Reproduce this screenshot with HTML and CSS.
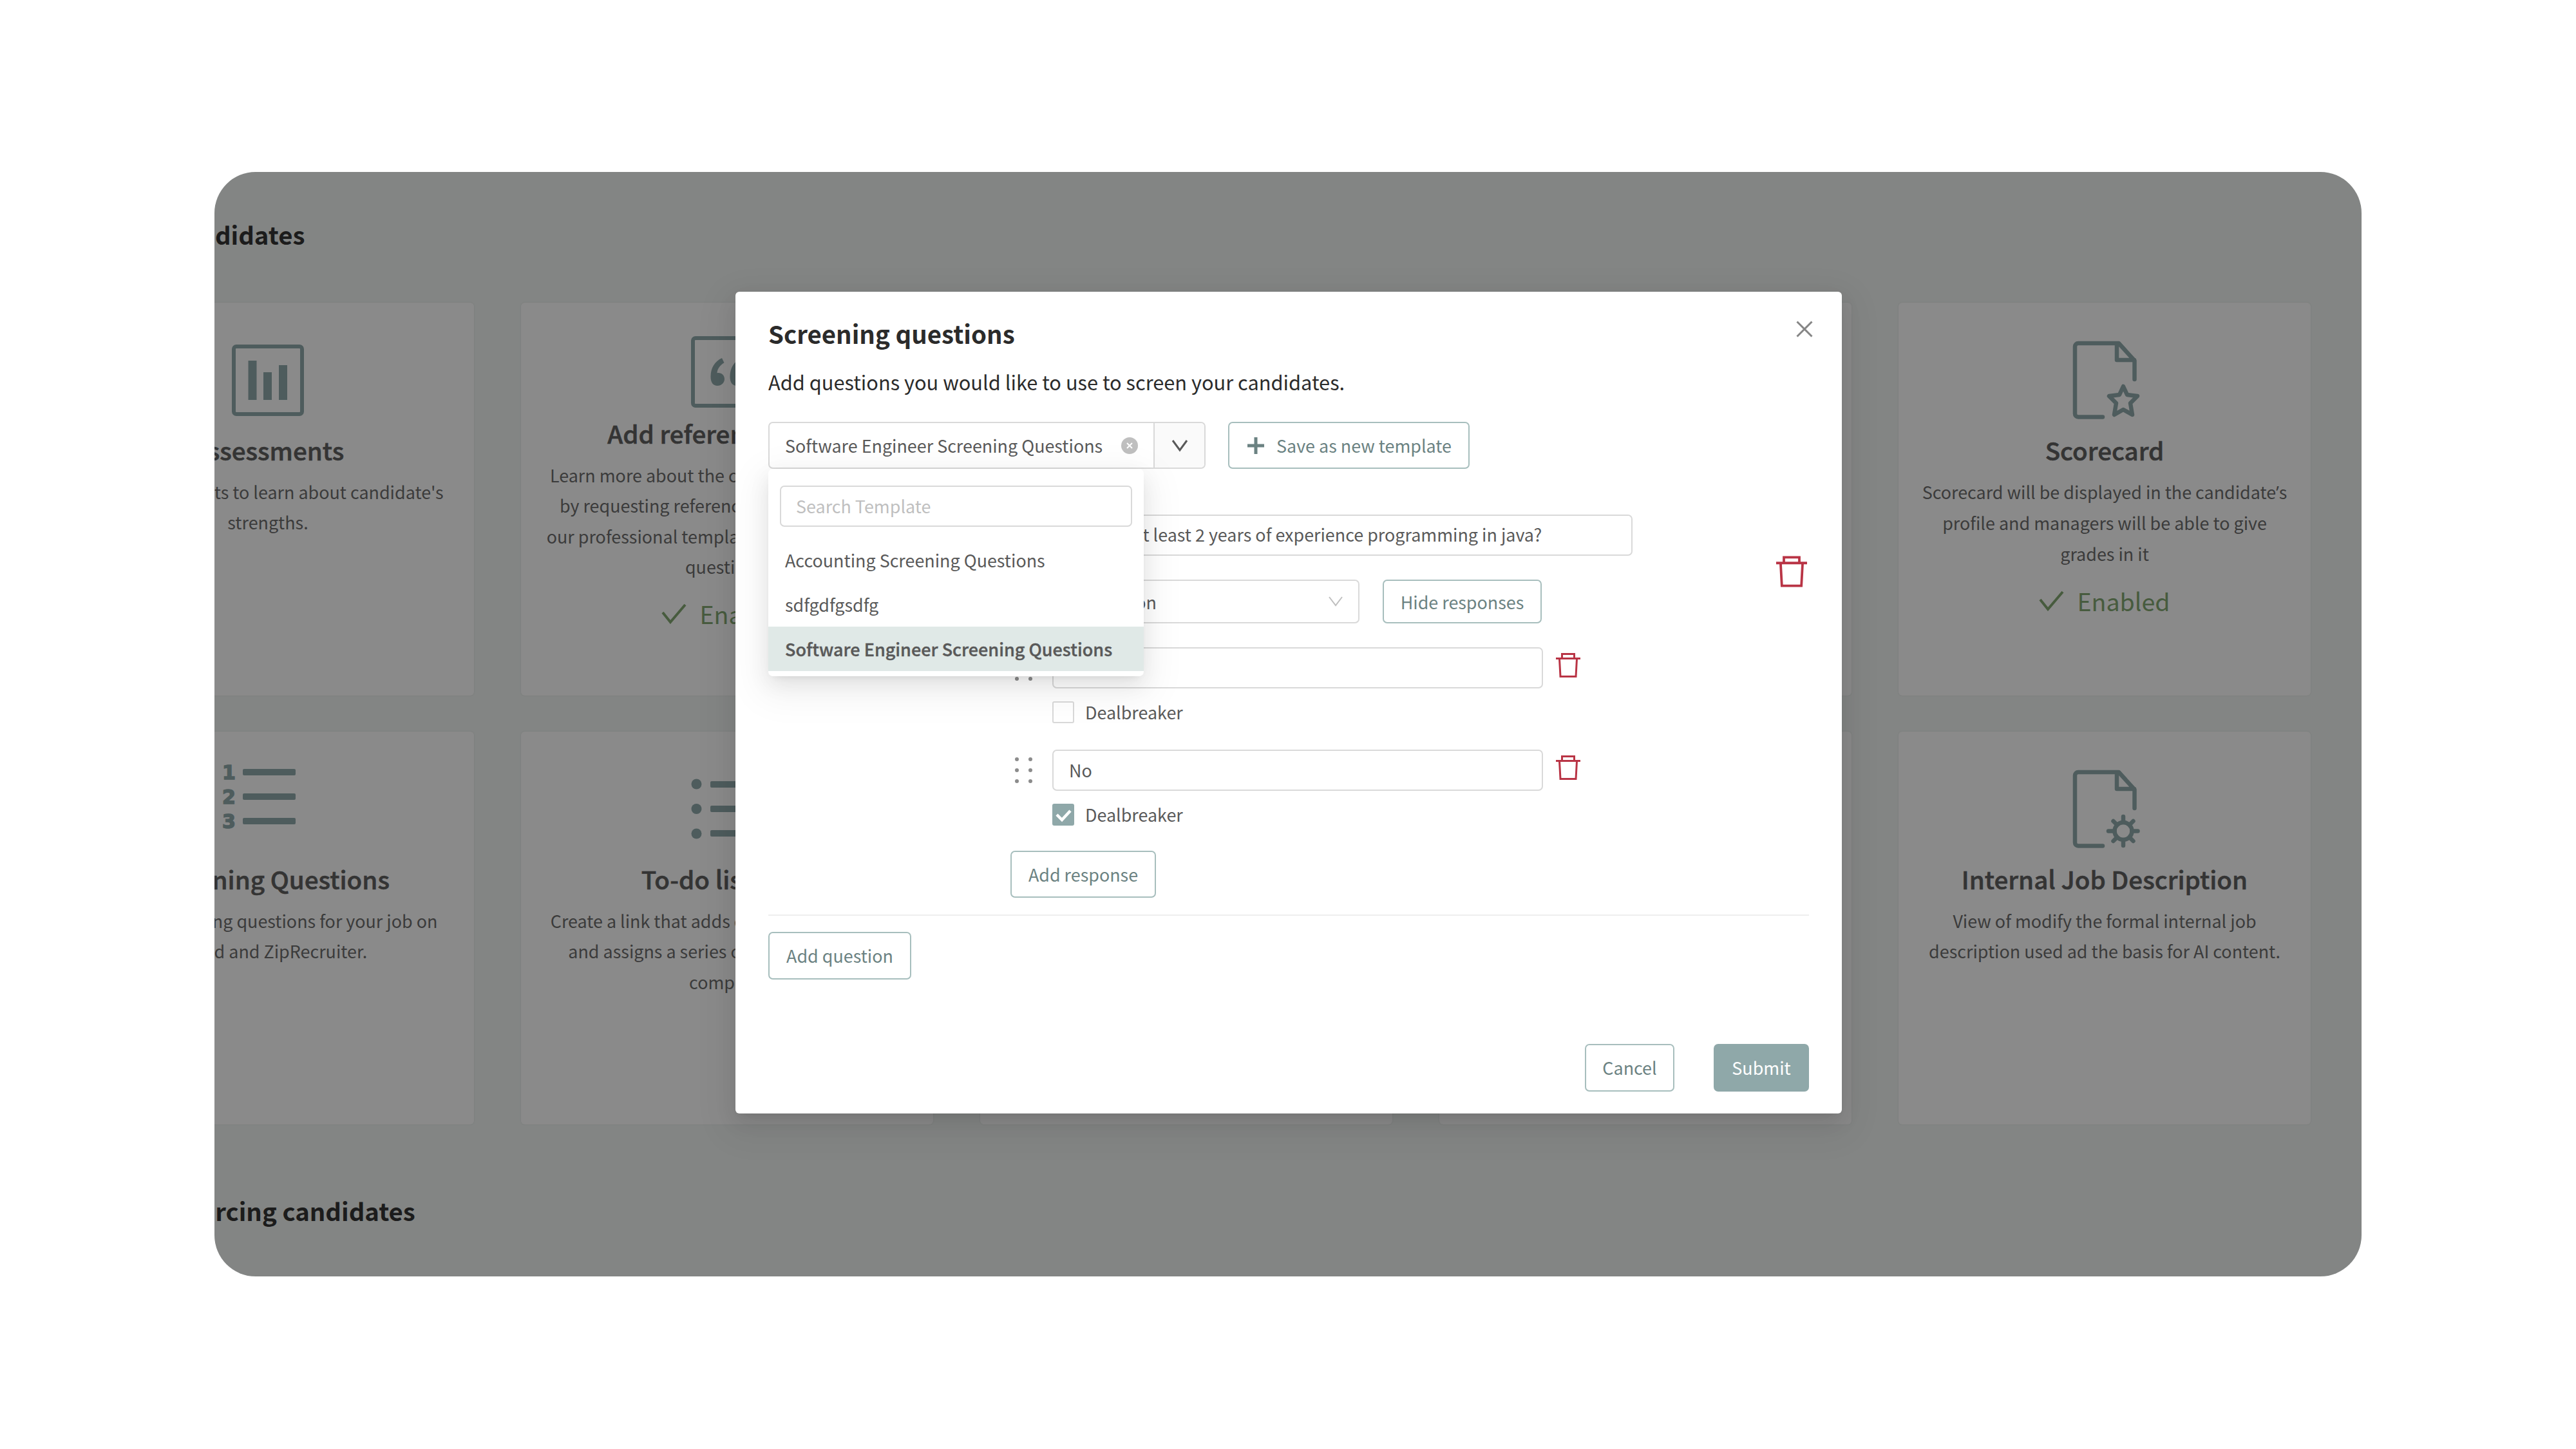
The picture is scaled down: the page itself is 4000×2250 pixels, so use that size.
FILE: index.html
```
<!DOCTYPE html>
<html lang="en">
<head>
  <meta charset="UTF-8" />
  <meta name="viewport" content="width=device-width, initial-scale=1.0"/>
  <title>Screening questions</title>
  <link rel="stylesheet" href="styles.css">
</head>
<body>

  <div class="frame">
    <div class="page">
      <h2 class="section-title">candidates</h2>

      <div class="cards">
        <div class="card">
          <svg class="card-icon" viewBox="0 0 128 128">
            <rect x="11" y="12" width="106" height="105" rx="4" fill="none" stroke="currentColor" stroke-width="6"/>
            <rect x="33.5" y="34" width="13" height="61"/>
            <rect x="57" y="52" width="13" height="43"/>
            <rect x="81" y="41" width="13" height="54"/>
          </svg>
          <h3>Assessments</h3>
          <p>Use assessments to learn about candidate's<br>strengths.</p>
        </div>

        <div class="card compact">
          <svg class="card-icon" viewBox="0 0 128 128">
            <rect x="11" y="12" width="106" height="105" rx="4" fill="none" stroke="currentColor" stroke-width="6"/>
            <path id="quote" d="M56 43c-11 5-17.500 15-17.500 29c0 9 4 14 10.500 14c6 0 11-4.500 11-10.500c0-5.500-4-9.500-9.500-9.500c-1 0-1.500 0-2 .3c.6-7 4.500-12 11-16z"/>
            <use href="#quote" x="30"/>
          </svg>
          <h3>Add reference check</h3>
          <p>Learn more about the candidate's past work<br>by requesting references online and using<br>our professional templates or adding custom<br>questions.</p>
          <div class="enabled">
            <svg viewBox="0 0 39 32"><path d="M2 14l12 15L37 2"/></svg>
            Enabled
          </div>
        </div>

        <div class="card"></div>
        <div class="card"></div>

        <div class="card">
          <svg class="card-icon" viewBox="0 0 128 128">
            <path class="line" d="M110.500 63V34L86 7H23a5 5 0 0 0-5 5v104.500a5 5 0 0 0 5 5h38M83 8v25h27"/>
            <path class="line" d="M93 74l6 13 16 2-11 11 3 18-14-8-14 8 3-18-11-11 16-2z"/>
          </svg>
          <h3>Scorecard</h3>
          <p>Scorecard will be displayed in the candidate<span class="apos">’</span>s<br>profile and managers will be able to give<br>grades in it</p>
          <div class="enabled">
            <svg viewBox="0 0 39 32"><path d="M2 14l12 15L37 2"/></svg>
            Enabled
          </div>
        </div>

        <div class="card">
          <svg class="card-icon" viewBox="0 0 128 128">
            <g class="digits">
              <text x="-7" y="17.500">1</text>
              <text x="-7" y="56">2</text>
              <text x="-7" y="94">3</text>
            </g>
            <rect x="25" y="2" width="82" height="10" rx="2"/>
            <rect x="25" y="40" width="82" height="10" rx="2"/>
            <rect x="25" y="78" width="82" height="10" rx="2"/>
          </svg>
          <h3>Screening Questions</h3>
          <p>Create screening questions for your job on<br>Indeed and ZipRecruiter.</p>
        </div>

        <div class="card">
          <svg class="card-icon" viewBox="0 0 128 128">
            <circle cx="16.500" cy="25.500" r="8"/>
            <circle cx="16.500" cy="64" r="8"/>
            <circle cx="16.500" cy="102.500" r="8"/>
            <rect x="38" y="21" width="82" height="10" rx="2"/>
            <rect x="38" y="59" width="82" height="10" rx="2"/>
            <rect x="38" y="97" width="82" height="10" rx="2"/>
          </svg>
          <h3>To-do list links</h3>
          <p>Create a link that adds candidates to the job<br>and assigns a series of tasks for them to<br>complete</p>
        </div>

        <div class="card"></div>
        <div class="card"></div>

        <div class="card">
          <svg class="card-icon" viewBox="0 0 128 128">
            <path class="line" d="M110.500 63V34L86 7H23a5 5 0 0 0-5 5v104.500a5 5 0 0 0 5 5h38M83 8v25h27"/>
            <circle class="line" cx="93" cy="98.500" r="13.500"/>
            <path class="line" d="M93 85V76M93 112v9M79.500 98.500H70M106.500 98.500h9M83.500 89l-6-6M102.500 89l6-6M83.500 108l-6 6M102.500 108l6 6"/>
          </svg>
          <h3>Internal Job Description</h3>
          <p>View of modify the formal internal job<br>description used ad the basis for AI content.</p>
        </div>
      </div>

      <h2 class="section-title sourcing">Sourcing candidates</h2>
    </div>

    <div class="mask">
      <div class="modal">
        <svg class="close" viewBox="0 0 26 26"><path d="M1.500 1.500l23 23M24.500 1.500l-23 23"/></svg>
        <h1>Screening questions</h1>
        <p class="intro">Add questions you would like to use to screen your candidates.</p>

        <div class="toolbar">
          <div class="template">
            <div class="template-value">
              Software Engineer Screening Questions
              <svg class="clear" viewBox="0 0 26 26"><circle cx="13" cy="13" r="13"/><path d="M9 9l8 8M17 9l-8 8"/></svg>
            </div>
            <div class="template-arrow">
              <svg viewBox="0 0 26 20"><path d="M2 2l11 15L24 2"/></svg>
            </div>

            <div class="dropdown">
              <div class="search">Search Template</div>
              <div class="option">Accounting Screening Questions</div>
              <div class="option">sdfgdfgsdfg</div>
              <div class="option selected">Software Engineer Screening Questions</div>
            </div>
          </div>
          <button class="btn save">
            <svg viewBox="0 0 26 26"><path d="M13 0v26M0 13h26"/></svg>
            Save as new template
          </button>
        </div>

        <div class="question">
          <div class="question-body">
            <div class="input title-input">Do you have at least 2 years of experience programming in java?</div>
            <div class="type-row">
              <div class="select">
                Yes/No question
                <svg viewBox="0 0 24 18"><path d="M2 2l10 13L22 2"/></svg>
              </div>
              <button class="btn">Hide responses</button>
            </div>

            <div class="response">
              <svg class="drag" viewBox="0 0 28 42"><circle cx="4" cy="4" r="3"/><circle cx="25" cy="4" r="3"/><circle cx="4" cy="21" r="3"/><circle cx="25" cy="21" r="3"/><circle cx="4" cy="38" r="3"/><circle cx="25" cy="38" r="3"/></svg>
              <div class="input">Yes</div>
              <svg class="trash" viewBox="0 0 38 38"><path d="M0 8.500h38M9.500 8V1.500h19V8M5.500 9L7 36.500h24L32.500 9"/></svg>
            </div>
            <div class="dealbreaker">
              <span class="checkbox"></span>
              Dealbreaker
            </div>

            <div class="response">
              <svg class="drag" viewBox="0 0 28 42"><circle cx="4" cy="4" r="3"/><circle cx="25" cy="4" r="3"/><circle cx="4" cy="21" r="3"/><circle cx="25" cy="21" r="3"/><circle cx="4" cy="38" r="3"/><circle cx="25" cy="38" r="3"/></svg>
              <div class="input">No</div>
              <svg class="trash" viewBox="0 0 38 38"><path d="M0 8.500h38M9.500 8V1.500h19V8M5.500 9L7 36.500h24L32.500 9"/></svg>
            </div>
            <div class="dealbreaker">
              <span class="checkbox checked">
                <svg viewBox="0 0 34 34"><path d="M7 17l8 8L28 11"/></svg>
              </span>
              Dealbreaker
            </div>

            <button class="btn add-response">Add response</button>
          </div>
          <svg class="trash trash-big" viewBox="0 0 38 38"><path d="M0 8.500h38M9.500 8V1.500h19V8M5.500 9L7 36.500h24L32.500 9"/></svg>
        </div>

        <button class="btn add-question">Add question</button>

        <div class="footer">
          <button class="btn">Cancel</button>
          <button class="btn primary">Submit</button>
        </div>
      </div>
    </div>
  </div>

</body>
</html>
```
FILE: styles.css
```
* {
  box-sizing: border-box;
}
body {
  margin: 0;
  padding: 267px 333px;
  background: #fff;
  font-family: "Noto Sans CJK SC", "Open Sans", sans-serif;
  font-size: 26.9px;
  color: #595959;
}
h1, h2, h3, p {
  margin: 0;
}
.frame {
  position: relative;
  width: 3334px;
  height: 1715px;
  border-radius: 64px;
  background: #eef2f0;
  overflow: hidden;
}

/* page behind the modal, scrolled to the right */
.page {
  width: 3571px;
  margin-left: -237px;
  padding-top: 67px;
}
.section-title {
  margin-left: 171px;
  font-size: 38.3px;
  font-weight: 700;
  line-height: 60px;
  color: #333;
}
.section-title.sourcing {
  margin-left: 166px;
}
.cards {
  display: grid;
  grid-template-columns: repeat(5, 640px);
  grid-auto-rows: 610px;
  gap: 56px 73px;
  margin: 76px 0 104px;
}
.card {
  padding-top: 56px;
  border-radius: 6px;
  background: #fcfcfc;
  box-shadow: 0 0 3px rgba(0, 0, 0, 0.08);
  text-align: center;
}
.card-icon {
  display: block;
  width: 128px;
  height: 128px;
  margin: 0 auto 14px;
  overflow: visible;
  fill: currentColor;
  color: #8fa8a9;
}
.card-icon .line {
  fill: none;
  stroke: currentColor;
  stroke-width: 6.5;
  stroke-linecap: round;
  stroke-linejoin: round;
}
.digits {
  font: 700 30px "DejaVu Sans", sans-serif;
  stroke: currentColor;
  stroke-width: 1.5;
}
.card h3 {
  font-size: 38.6px;
  font-weight: 500;
  line-height: 60px;
  color: #606060;
  -webkit-text-stroke: 0.6px #606060;
}
.card p {
  margin-top: 12px;
  line-height: 47.3px;
  white-space: nowrap;
  color: #6c6c6c;
}
.apos {
  font-family: "Open Sans", sans-serif;
}
.card.compact {
  padding-top: 43px;
}
.card.compact .card-icon {
  margin-bottom: 1px;
}
.enabled {
  display: flex;
  justify-content: center;
  align-items: center;
  gap: 20px;
  margin-top: 20px;
  font-size: 37.6px;
  line-height: 60px;
  color: #81a771;
}
.enabled svg {
  width: 39px;
  height: 32px;
  fill: none;
  stroke: currentColor;
  stroke-width: 4;
}

.mask {
  position: absolute;
  inset: 0;
  display: flex;
  justify-content: center;
  align-items: flex-start;
  padding: 186px 0 0 2px;
  background: rgba(0, 0, 0, 0.45);
}
.modal {
  position: relative;
  width: 1718px;
  height: 1276px;
  padding: 38px 51px 34px;
  border-radius: 6px;
  background: #fff;
  box-shadow: 0 6px 12px -8px rgba(0, 0, 0, 0.12), 0 12px 32px rgba(0, 0, 0, 0.08), 0 18px 56px 16px rgba(0, 0, 0, 0.05);
}
.close {
  position: absolute;
  top: 45px;
  right: 45px;
  width: 26px;
  height: 26px;
  stroke: #858585;
  stroke-width: 3;
}
.modal h1 {
  font-size: 38.4px;
  font-weight: 700;
  line-height: 52px;
  color: #2b2b2b;
}
.intro {
  margin-top: 28px;
  font-size: 30.77px;
  line-height: 44px;
  color: #2b2b2b;
}

/* template picker */
.toolbar {
  display: flex;
  gap: 35px;
  margin-top: 40px;
}
.template {
  position: relative;
  display: flex;
  width: 679px;
  height: 73px;
  border: 2px solid #d9d9d9;
  border-radius: 7px;
}
.template-value {
  display: flex;
  flex: 1;
  justify-content: space-between;
  align-items: center;
  padding: 0 24px 0 24px;
}
.clear {
  width: 26px;
  height: 26px;
  fill: #bfbfbf;
}
.clear path {
  stroke: #fff;
  stroke-width: 2;
}
.template-arrow {
  display: flex;
  justify-content: center;
  align-items: center;
  width: 79px;
  border-left: 2px solid #d9d9d9;
  border-radius: 0 6px 6px 0;
  background: #fafafa;
}
.template-arrow svg {
  width: 26px;
  height: 20px;
  fill: none;
  stroke: #595959;
  stroke-width: 3;
}
.dropdown {
  position: absolute;
  top: 71px;
  left: -2px;
  z-index: 2;
  width: 583px;
  padding: 26px 0 8px;
  border-radius: 7px;
  background: #fff;
  box-shadow: 0 6px 12px -8px rgba(0, 0, 0, 0.12), 0 12px 32px rgba(0, 0, 0, 0.08), 0 18px 56px 16px rgba(0, 0, 0, 0.05);
}
.search {
  height: 64px;
  margin: 0 18px 17px;
  padding-left: 23px;
  border: 2px solid #d9d9d9;
  border-radius: 7px;
  line-height: 59px;
  color: #bfbfbf;
}
.option {
  height: 69px;
  padding-left: 26px;
  line-height: 69px;
  white-space: nowrap;
}
.option.selected {
  background: #e0e9e7;
  font-size: 27px;
  font-weight: 500;
  -webkit-text-stroke: 0.4px #595959;
}

.btn {
  height: 73px;
  padding: 0 25px;
  border: 2px solid #a7bebd;
  border-radius: 7px;
  background: #fff;
  font: inherit;
  line-height: 66px;
  color: #6b8282;
  white-space: nowrap;
}
.btn.save {
  display: flex;
  align-items: center;
  gap: 19px;
  width: 375px;
  padding: 0 0 0 28px;
}
.btn.save svg {
  width: 26px;
  height: 26px;
  stroke: currentColor;
  stroke-width: 5;
}

/* question editor */
.question {
  display: flex;
  align-items: flex-start;
  padding: 71px 0 26px 376px;
  border-bottom: 2px solid #eee;
}
.question-body {
  width: 966px;
}
.input {
  height: 64px;
  padding-left: 24px;
  border: 2px solid #d9d9d9;
  border-radius: 7px;
  line-height: 60px;
  white-space: nowrap;
}
.title-input {
  padding-left: 29px;
  line-height: 58px;
}
.type-row {
  display: flex;
  gap: 36px;
  margin: 37px 0;
}
.type-row .btn {
  width: 247px;
  height: 68px;
}
.select {
  display: flex;
  justify-content: space-between;
  align-items: center;
  width: 542px;
  height: 68px;
  padding: 0 23px 0 22px;
  border: 2px solid #d9d9d9;
  border-radius: 7px;
}
.select svg {
  width: 24px;
  height: 18px;
  fill: none;
  stroke: #bfbfbf;
  stroke-width: 2;
}
.response {
  display: flex;
  align-items: center;
  padding-left: 6px;
}
.response .input {
  width: 762px;
  margin-left: 31px;
}
.drag {
  width: 28px;
  height: 42px;
  fill: #8c8c8c;
}
.trash {
  width: 38px;
  height: 38px;
  margin: -8px 0 0 20px;
  fill: none;
  stroke: #b93445;
  stroke-width: 3;
}
.trash-big {
  width: 48px;
  height: 49px;
  margin: 64px 0 0 223px;
}
.dealbreaker {
  display: flex;
  align-items: center;
  gap: 17px;
  height: 34px;
  margin: 20px 0 41px 65px;
  line-height: 32px;
}
.checkbox {
  width: 34px;
  height: 34px;
  border: 2px solid #d9d9d9;
  border-radius: 3px;
  background: #fff;
}
.checkbox.checked {
  border: 0;
  background: #8fa8a9;
}
.checkbox svg {
  display: block;
  fill: none;
  stroke: #fff;
  stroke-width: 4.5;
}
.add-response {
  display: block;
  width: 226px;
  margin-top: -2px;
}
.add-question {
  display: block;
  width: 222px;
  height: 74px;
  margin-top: 25px;
}
.footer {
  display: flex;
  justify-content: flex-end;
  gap: 61px;
  margin-top: 100px;
}
.footer .btn {
  width: 139px;
  height: 74px;
}
.footer .primary {
  width: 148px;
  border: 0;
  background: #8fa8a9;
  line-height: 70px;
  color: #fff;
}
```
